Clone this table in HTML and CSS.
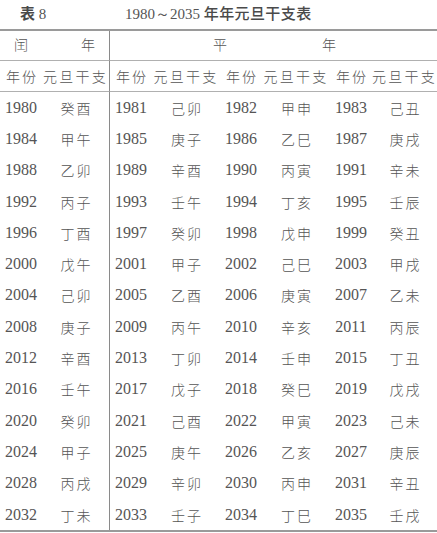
FILE: index.html
```
<!DOCTYPE html>
<html lang="zh">
<head>
<meta charset="utf-8">
<link rel="stylesheet" href="styles.css">
</head>
<body>
<div class="page">
  <div class="title">
    <span class="label"><span class="cjk-b">表</span> <span class="num">8</span></span>
    <span class="heading"><span class="num">1980～2035</span> <span class="cjk-m">年年元旦干支表</span></span>
  </div>
  <div class="grid">
    <div class="h1 left"><span>闰</span><span>年</span></div>
    <div class="h1 right"><span>平</span><span>年</span></div>

    <div class="h2 y">年份</div><div class="h2 g sep">元旦干支</div>
    <div class="h2 y">年份</div><div class="h2 g">元旦干支</div>
    <div class="h2 y">年份</div><div class="h2 g">元旦干支</div>
    <div class="h2 y">年份</div><div class="h2 g">元旦干支</div>

    <div class="c y">1980</div><div class="c g sep">癸酉</div><div class="c y">1981</div><div class="c g">己卯</div><div class="c y">1982</div><div class="c g">甲申</div><div class="c y">1983</div><div class="c g">己丑</div>
    <div class="c y">1984</div><div class="c g sep">甲午</div><div class="c y">1985</div><div class="c g">庚子</div><div class="c y">1986</div><div class="c g">乙巳</div><div class="c y">1987</div><div class="c g">庚戌</div>
    <div class="c y">1988</div><div class="c g sep">乙卯</div><div class="c y">1989</div><div class="c g">辛酉</div><div class="c y">1990</div><div class="c g">丙寅</div><div class="c y">1991</div><div class="c g">辛未</div>
    <div class="c y">1992</div><div class="c g sep">丙子</div><div class="c y">1993</div><div class="c g">壬午</div><div class="c y">1994</div><div class="c g">丁亥</div><div class="c y">1995</div><div class="c g">壬辰</div>
    <div class="c y">1996</div><div class="c g sep">丁酉</div><div class="c y">1997</div><div class="c g">癸卯</div><div class="c y">1998</div><div class="c g">戊申</div><div class="c y">1999</div><div class="c g">癸丑</div>
    <div class="c y">2000</div><div class="c g sep">戊午</div><div class="c y">2001</div><div class="c g">甲子</div><div class="c y">2002</div><div class="c g">己巳</div><div class="c y">2003</div><div class="c g">甲戌</div>
    <div class="c y">2004</div><div class="c g sep">己卯</div><div class="c y">2005</div><div class="c g">乙酉</div><div class="c y">2006</div><div class="c g">庚寅</div><div class="c y">2007</div><div class="c g">乙未</div>
    <div class="c y">2008</div><div class="c g sep">庚子</div><div class="c y">2009</div><div class="c g">丙午</div><div class="c y">2010</div><div class="c g">辛亥</div><div class="c y">2011</div><div class="c g">丙辰</div>
    <div class="c y">2012</div><div class="c g sep">辛酉</div><div class="c y">2013</div><div class="c g">丁卯</div><div class="c y">2014</div><div class="c g">壬申</div><div class="c y">2015</div><div class="c g">丁丑</div>
    <div class="c y">2016</div><div class="c g sep">壬午</div><div class="c y">2017</div><div class="c g">戊子</div><div class="c y">2018</div><div class="c g">癸巳</div><div class="c y">2019</div><div class="c g">戊戌</div>
    <div class="c y">2020</div><div class="c g sep">癸卯</div><div class="c y">2021</div><div class="c g">己酉</div><div class="c y">2022</div><div class="c g">甲寅</div><div class="c y">2023</div><div class="c g">己未</div>
    <div class="c y">2024</div><div class="c g sep">甲子</div><div class="c y">2025</div><div class="c g">庚午</div><div class="c y">2026</div><div class="c g">乙亥</div><div class="c y">2027</div><div class="c g">庚辰</div>
    <div class="c y">2028</div><div class="c g sep">丙戌</div><div class="c y">2029</div><div class="c g">辛卯</div><div class="c y">2030</div><div class="c g">丙申</div><div class="c y">2031</div><div class="c g">辛丑</div>
    <div class="c y">2032</div><div class="c g sep">丁未</div><div class="c y">2033</div><div class="c g">壬子</div><div class="c y">2034</div><div class="c g">丁巳</div><div class="c y">2035</div><div class="c g">壬戌</div>
  </div>
</div>
</body>
</html>
```
FILE: styles.css
```
html, body {
  margin: 0;
  padding: 0;
  background: #ffffff;
}
.page {
  width: 437px;
  color: #555555;
  font-family: "Liberation Serif", "Noto Sans CJK SC", serif;
}
.title {
  height: 29px;
  display: flex;
  align-items: center;
  padding-bottom: 4px;
  box-sizing: border-box;
  font-size: 15px;
  white-space: nowrap;
}
.label {
  margin-left: 20px;
  width: 105px;
}
.cjk-b {
  font-family: "Noto Sans CJK SC", sans-serif;
  font-weight: 700;
  color: #4a4a4a;
}
.cjk-m {
  font-family: "Noto Sans CJK SC", sans-serif;
  font-weight: 500;
  letter-spacing: 0.4px;
  color: #4a4a4a;
}
.num {
  font-family: "Liberation Serif", serif;
}
.grid {
  display: grid;
  grid-template-columns: 42px 68px 42px 68px 42px 68px 42px 65px;
  grid-template-rows: 30px 31px repeat(14, 31.3px);
  border-top: 2px solid #9a9a9a;
  border-bottom: 2px solid #9a9a9a;
}
.grid > div {
  box-sizing: border-box;
  display: flex;
  align-items: center;
  justify-content: center;
  white-space: nowrap;
}
.h1 {
  border-bottom: 1px solid #b0b0b0;
  font-family: "Noto Sans CJK SC", sans-serif;
  font-weight: 300;
  font-size: 14px;
  padding-bottom: 3px;
}
.h1.left {
  grid-column: 1 / 3;
  border-right: 1px solid #8a8a8a;
  gap: 53px;
}
.h1.right {
  grid-column: 3 / 9;
  gap: 95px;
  padding-left: 2px;
}
.h2 {
  border-bottom: 1px solid #b0b0b0;
  font-family: "Noto Sans CJK SC", sans-serif;
  font-weight: 300;
  font-size: 14px;
}
.h2.y {
  letter-spacing: 2px;
  text-indent: 2px;
}
.h2.g {
  letter-spacing: 2.2px;
}
.sep {
  border-right: 1px solid #8a8a8a;
}
.c.y {
  font-family: "Liberation Serif", serif;
  font-size: 16px;
}
.c.g {
  font-family: "Noto Sans CJK SC", sans-serif;
  font-weight: 300;
  font-size: 14px;
  letter-spacing: 2px;
  text-indent: 2px;
}
```
